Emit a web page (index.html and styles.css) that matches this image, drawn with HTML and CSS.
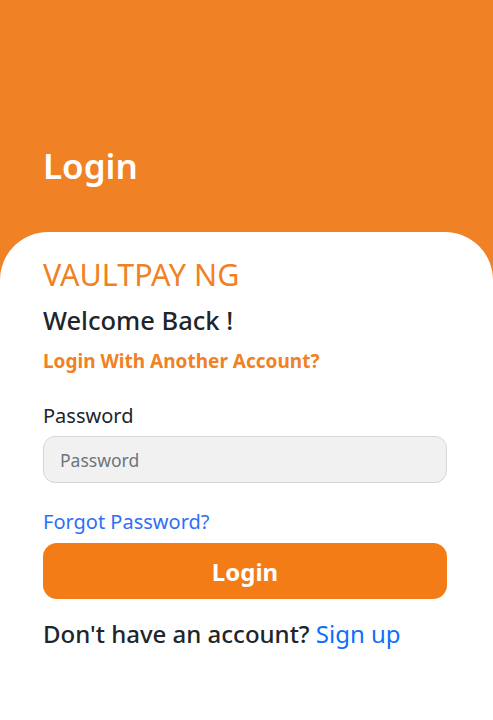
FILE: index.html
```html
<!DOCTYPE html>
<html lang="en">
  <head>
    <meta charset="UTF-8" />
    <meta name="viewport" content="width=device-width, initial-scale=1.0" />
    <title>Login - VaultPay NG</title>
    <link rel="stylesheet" href="styles.css">
  </head>
  <body>
    <header class="top">
      <h1 class="top-title">Login</h1>
    </header>
    <main class="card">
      <h2 class="brand">VAULTPAY NG</h2>
      <h3 class="welcome">Welcome Back !</h3>
      <a class="switch-link" href="#">Login With Another Account?</a>
      <form class="login-form">
        <label class="field-label" for="password">Password</label>
        <input class="field-input" type="password" id="password" placeholder="Password" />
        <a class="forgot-link" href="#">Forgot Password?</a>
        <button class="login-button" type="button">Login</button>
      </form>
      <p class="signup">Don't have an account? <a href="#">Sign up</a></p>
    </main>
  </body>
</html>
```

FILE: styles.css
```css
body {
  font-family: "Noto Sans", "Open Sans", sans-serif;
  margin: 0;
  background-color: #f08125;
  color: #212529;
  min-height: 100vh;
  display: flex;
  flex-direction: column;
}
.top {
  height: 232px;
  box-sizing: border-box;
  padding: 0 43px 43px;
  display: flex;
  align-items: flex-end;
}
.top-title {
  margin: 0;
  color: white;
  font-size: 35px;
  font-weight: 600;
}
.card {
  flex: 1;
  background-color: white;
  border-radius: 48px 48px 0 0;
  padding: 21px 46px 40px 43px;
}
.brand {
  margin: 0;
  color: #f08125;
  font-size: 30.5px;
  font-weight: 400;
}
.welcome {
  margin: 8px 0 0;
  font-size: 25.5px;
  line-height: 35px;
  font-weight: 500;
}
.switch-link {
  display: block;
  margin-top: 10px;
  color: #f08125;
  font-size: 19px;
  font-weight: 700;
  text-decoration: none;
}
.login-form {
  display: flex;
  flex-direction: column;
  margin-top: 28px;
}
.field-label {
  font-size: 20px;
}
.field-input {
  margin-top: 7px;
  height: 47px;
  box-sizing: border-box;
  padding: 0 16px;
  border: 1px solid #d3d7db;
  border-radius: 12px;
  background-color: #f1f1f1;
  font-family: inherit;
  font-size: 17.5px;
}
.field-input::placeholder {
  color: #6c757d;
}
.forgot-link {
  margin-top: 25px;
  color: #2f6ff5;
  font-size: 20px;
  text-decoration: none;
}
.login-button {
  margin-top: 8px;
  height: 56px;
  border: none;
  border-radius: 14px;
  background-color: #f47c16;
  color: white;
  font-family: inherit;
  font-size: 24px;
  font-weight: 700;
  cursor: pointer;
}
.signup {
  margin: 18px 0 0;
  font-size: 24px;
  font-weight: 500;
}
.signup a {
  color: #0d6efd;
  font-weight: 400;
  text-decoration: none;
}
```
